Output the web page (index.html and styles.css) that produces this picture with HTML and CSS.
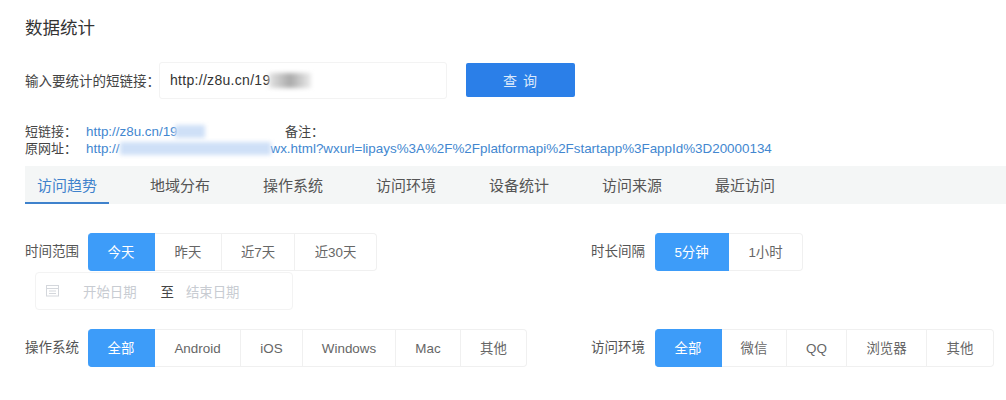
FILE: index.html
```html
<!DOCTYPE html>
<html>
<head>
  <title>数据统计</title>
  <link rel="stylesheet" href="styles.css">
</head>
<body>
  <h2 class="title">数据统计</h2>

  <!-- Query -->
  <div class="query">
    <span class="query-label">输入要统计的短链接：</span>
    <div class="query-input">http://z8u.cn/19<span class="smudge"></span></div>
    <button class="query-btn">查 询</button>
  </div>

  <!-- Link info -->
  <div class="info">
    <div class="info-row">
      <span class="info-label">短链接：</span>
      <a class="info-link short-link">http://z8u.cn/19<span class="blur-patch short"></span></a>
      <span class="info-note">备注：</span>
    </div>
    <div class="info-row">
      <span class="info-label">原网址：</span>
      <a class="info-link">http://<span class="blur-patch long"></span>wx.html?wxurl=lipays%3A%2F%2Fplatformapi%2Fstartapp%3FappId%3D20000134</a>
    </div>
  </div>

  <div class="tabs">
    <div class="tab active">访问趋势</div>
    <div class="tab">地域分布</div>
    <div class="tab">操作系统</div>
    <div class="tab">访问环境</div>
    <div class="tab">设备统计</div>
    <div class="tab">访问来源</div>
    <div class="tab">最近访问</div>
  </div>

  <!-- Filters -->
  <div class="filters">
    <div class="filter-col">
      <div class="filter">
        <span class="filter-label">时间范围</span>
        <div class="seg">
          <span class="seg-item on w67">今天</span>
          <span class="seg-item w67">昨天</span>
          <span class="seg-item w73">近7天</span>
          <span class="seg-item w82">近30天</span>
        </div>
      </div>
      <div class="date-box">
        <svg class="date-icon" width="13" height="13" viewBox="0 0 13 13">
          <rect x="0.5" y="1.5" width="12" height="10.5" fill="none" stroke="#d4d7dc"/>
          <path d="M1 4.5h11M3 7h7M3 9.5h7" stroke="#d4d7dc" fill="none"/>
        </svg>
        <span class="date-text start">开始日期</span>
        <span class="date-sep">至</span>
        <span class="date-text">结束日期</span>
      </div>
      <div class="filter os">
        <span class="filter-label">操作系统</span>
        <div class="seg">
          <span class="seg-item on w67">全部</span>
          <span class="seg-item w86">Android</span>
          <span class="seg-item w62">iOS</span>
          <span class="seg-item w93">Windows</span>
          <span class="seg-item w65">Mac</span>
          <span class="seg-item w66">其他</span>
        </div>
      </div>
    </div>
    <div class="filter-col right">
      <div class="filter">
        <span class="filter-label">时长间隔</span>
        <div class="seg">
          <span class="seg-item on w74">5分钟</span>
          <span class="seg-item w74">1小时</span>
        </div>
      </div>
      <div class="filter os spaced">
        <span class="filter-label">访问环境</span>
        <div class="seg">
          <span class="seg-item on w67">全部</span>
          <span class="seg-item w65">微信</span>
          <span class="seg-item w60">QQ</span>
          <span class="seg-item w80">浏览器</span>
          <span class="seg-item w67">其他</span>
        </div>
      </div>
    </div>
  </div>
</body>
</html>
```

FILE: styles.css
```css
body {
  font-family: "Liberation Sans", "Noto Sans CJK SC", sans-serif;
  background-color: #fff;
  color: #555;
  margin: 0;
  padding: 0 0 0 25px;
  height: 400px;
  overflow: hidden;
}

.title {
  font-size: 17.5px;
  font-weight: normal;
  line-height: 24px;
  color: #333;
  margin: 0;
  padding-top: 16px;
}

.query {
  display: flex;
  align-items: center;
  margin-top: 22px;
  height: 37px;
}

.query-label {
  flex: none;
  width: 134px;
  margin-bottom: 2px;
  font-size: 13.5px;
  white-space: nowrap;
  color: #444;
}

.query-input {
  width: 276px;
  height: 35px;
  line-height: 35px;
  padding-left: 10px;
  border: 1px solid #f3f3f3;
  border-radius: 3px;
  font-size: 14px;
  color: #333;
  letter-spacing: 0.3px;
  margin-right: 19px;
}

.smudge {
  display: inline-block;
  width: 42px;
  height: 15px;
  margin-left: -2px;
  vertical-align: -3px;
  background: linear-gradient(90deg, #e4e4e4, #aaa 50%, #ececec);
  filter: blur(2px);
}

.query-btn {
  width: 109px;
  height: 34px;
  margin-bottom: 2px;
  background-color: #2b7fe8;
  border: none;
  border-radius: 2px;
  color: #dbe9fb;
  font-family: inherit;
  font-size: 14px;
  letter-spacing: 1px;
}

.info {
  margin-top: 24px;
  font-size: 13px;
  line-height: 17px;
  color: #444;
}

.info-row {
  display: flex;
  white-space: nowrap;
}

.info-label {
  width: 61px;
}

.info-link {
  color: #4287d0;
  font-size: 13.4px;
}

.short-link {
  width: 199px;
}

.blur-patch {
  display: inline-block;
  height: 13px;
  vertical-align: -2px;
  background-color: #cfe0f7;
  filter: blur(2px);
}

.blur-patch.short {
  width: 30px;
  margin-left: -3px;
}

.blur-patch.long {
  width: 151px;
}

.tabs {
  display: flex;
  gap: 29px;
  height: 38px;
  margin-top: 9px;
  background-color: #f4f6f6;
}

.tab {
  height: 36px;
  line-height: 39px;
  padding: 0 12px;
  font-size: 15px;
  color: #555;
}

.tab.active {
  color: #3f82cc;
  border-bottom: 2px solid #3f82cc;
}

.filters {
  display: flex;
  margin-top: 29px;
}

.filter-col {
  flex: none;
  width: 566px;
}

.filter-col.right {
  width: 415px;
}

.filter-col.right .filter-label {
  width: 64px;
}

.filter {
  display: flex;
  align-items: center;
}

.filter.os {
  margin-top: 19px;
}

.filter.spaced {
  margin-top: 58px;
}

.filter-label {
  flex: none;
  width: 63px;
  height: 38px;
  line-height: 38px;
  font-size: 13.5px;
  color: #555;
}

.seg {
  display: flex;
  height: 38px;
  border-radius: 4px;
}

.seg-item {
  box-sizing: border-box;
  line-height: 37px;
  text-align: center;
  font-size: 13.4px;
  color: #666;
  border: 1px solid #f0f0f0;
  border-left: none;
}

.seg-item:last-child {
  border-radius: 0 4px 4px 0;
}

.seg-item.on {
  background-color: #3d9cf9;
  border-color: #3d9cf9;
  color: #fff;
  border-radius: 4px 0 0 4px;
}

.w60 { width: 60px; }
.w62 { width: 62px; }
.w65 { width: 65px; }
.w66 { width: 66px; }
.w67 { width: 67px; }
.w73 { width: 73px; }
.w74 { width: 74px; }
.w80 { width: 80px; }
.w82 { width: 82px; }
.w86 { width: 86px; }
.w93 { width: 93px; }

.date-box {
  display: flex;
  align-items: center;
  box-sizing: border-box;
  width: 258px;
  height: 38px;
  margin-left: 10px;
  margin-top: 1px;
  padding-left: 10px;
  padding-bottom: 1px;
  border: 1px solid #f3f3f3;
  border-radius: 4px;
  font-size: 13.4px;
}

.date-text {
  color: #c8ccd2;
}

.date-text.start {
  margin-left: 24px;
}

.date-sep {
  color: #444;
  margin: 0 12px 0 24px;
}
```
